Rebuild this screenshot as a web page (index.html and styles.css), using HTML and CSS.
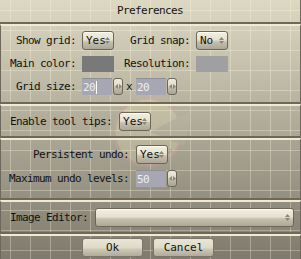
FILE: index.html
```html
<!DOCTYPE html>
<html lang="en">
<head>
  <meta charset="UTF-8" />
  <title>Preferences</title>
  <link rel="stylesheet" href="styles.css">
</head>
<body>
  <div class="window">
    <!-- faint logo behind the widgets -->
    <svg class="watermark" width="90" height="90" viewBox="0 0 90 90">
      <circle cx="42" cy="46" r="34" fill="#fff6c0" stroke="#e6a0a0" stroke-width="3"/>
      <path d="M44 46 L86 24 L78 60 Z" fill="#c9c2ae" />
      <path d="M30 60 Q44 78 66 64" fill="none" stroke="#e09090" stroke-width="4"/>
      <circle cx="34" cy="32" r="4" fill="#e0a0a0"/>
    </svg>

    <div class="title">Preferences</div>

    <section class="group grid-group">
      <div class="row">
        <span class="label col-a">Show grid:</span>
        <button class="menu small">Yes<svg class="updown" width="5" height="7" viewBox="0 0 5 7"><path d="M2.5 0 L5 3 L0 3 Z M0 4 L5 4 L2.5 7 Z" fill="#8a8678"/></svg></button>
        <span class="label col-b">Grid snap:</span>
        <button class="menu small">No<svg class="updown" width="5" height="7" viewBox="0 0 5 7"><path d="M2.5 0 L5 3 L0 3 Z M0 4 L5 4 L2.5 7 Z" fill="#8a8678"/></svg></button>
      </div>
      <div class="row">
        <span class="label col-a">Main color:</span>
        <span class="swatch main-color"></span>
        <span class="label col-b">Resolution:</span>
        <span class="swatch res-color"></span>
      </div>
      <div class="row">
        <span class="label col-a">Grid size:</span>
        <span class="entry">20<span class="cursor"></span></span>
        <span class="spin"><svg width="7" height="5" viewBox="0 0 7 5"><path d="M0 2.5 L3 0 L3 5 Z M4 0 L7 2.5 L4 5 Z" fill="#8a8678"/></svg></span>
        <span class="times">x</span>
        <span class="entry">20</span>
        <span class="spin"><svg width="7" height="5" viewBox="0 0 7 5"><path d="M0 2.5 L3 0 L3 5 Z M4 0 L7 2.5 L4 5 Z" fill="#8a8678"/></svg></span>
      </div>
    </section>

    <section class="group tips-group">
      <div class="row">
        <span class="label plain">Enable tool tips:</span>
        <button class="menu small">Yes<svg class="updown" width="5" height="7" viewBox="0 0 5 7"><path d="M2.5 0 L5 3 L0 3 Z M0 4 L5 4 L2.5 7 Z" fill="#8a8678"/></svg></button>
      </div>
    </section>

    <section class="group undo-group">
      <div class="row">
        <span class="label col-c">Persistent undo:</span>
        <button class="menu small">Yes<svg class="updown" width="5" height="7" viewBox="0 0 5 7"><path d="M2.5 0 L5 3 L0 3 Z M0 4 L5 4 L2.5 7 Z" fill="#8a8678"/></svg></button>
      </div>
      <div class="row">
        <span class="label col-c">Maximum undo levels:</span>
        <span class="entry">50</span>
        <span class="spin"><svg width="7" height="5" viewBox="0 0 7 5"><path d="M0 2.5 L3 0 L3 5 Z M4 0 L7 2.5 L4 5 Z" fill="#8a8678"/></svg></span>
      </div>
    </section>

    <section class="group editor-group">
      <div class="row">
        <span class="label plain">Image Editor:</span>
        <button class="menu wide"><svg class="updown" width="5" height="7" viewBox="0 0 5 7"><path d="M2.5 0 L5 3 L0 3 Z M0 4 L5 4 L2.5 7 Z" fill="#8a8678"/></svg></button>
      </div>
    </section>

    <section class="group buttons">
      <button class="push">Ok</button>
      <button class="push">Cancel</button>
    </section>
  </div>
</body>
</html>
```

FILE: styles.css
```css
:root {
  --dark-line: #6d685b;
  --light-line: #f2ead0;
  --text: #121212;
}

* {
  box-sizing: border-box;
}

body {
  margin: 0;
  font-family: 'DejaVu Sans Mono', monospace;
  font-size: 11px;
  letter-spacing: -0.62px;
  color: var(--text);
}

.window {
  position: relative;
  width: 301px;
  height: 259px;
  overflow: hidden;
  background-color: #b0aa98;
  background-image:
    linear-gradient(to right, rgba(255, 250, 225, 0.3) 1px, transparent 1px),
    linear-gradient(to bottom, rgba(255, 250, 225, 0.3) 1px, transparent 1px),
    linear-gradient(to bottom, #ddd8c2, #7e7a6d);
  background-size: 20px 20px, 20px 20px, 100% 100%;
  background-position: 10px 10px, 10px 10px, 0 0;
  display: flex;
  flex-direction: column;
}

.watermark {
  position: absolute;
  left: 106px;
  top: 86px;
  opacity: 0.2;
  pointer-events: none;
}

.title {
  position: relative;
  height: 24px;
  line-height: 22px;
  text-align: center;
  border-bottom: 2px solid var(--dark-line);
  border-right: 1px solid var(--dark-line);
}

.group {
  position: relative;
  border-top: 2px solid var(--light-line);
  border-bottom: 2px solid var(--dark-line);
  border-left: 1px solid var(--dark-line);
  border-right: 1px solid var(--dark-line);
}

.row {
  display: flex;
  align-items: center;
  height: 19px;
}

.label {
  white-space: pre;
  flex: none;
}

.col-a {
  width: 75px;
  margin-right: 6px;
  text-align: right;
}

.col-b {
  width: 76px;
  margin-right: 6px;
  text-align: right;
}

.col-c {
  width: 128px;
  margin-right: 7px;
  text-align: right;
}

.plain {
  margin-left: 9px;
  margin-right: 7px;
}

.grid-group {
  height: 80px;
  padding-top: 5px;
}

.grid-group .row + .row {
  margin-top: 4px;
}

.tips-group {
  height: 34px;
  display: flex;
  align-items: center;
}

.undo-group {
  height: 62px;
  padding-top: 5px;
}

.undo-group .row + .row {
  margin-top: 5px;
}

.editor-group {
  height: 34px;
  display: flex;
  align-items: center;
}

.editor-group .row {
  flex: 1;
}

.menu {
  position: relative;
  height: 19px;
  padding: 0 0 0 3px;
  font: inherit;
  color: var(--text);
  text-align: left;
  border: 1px solid #6a6659;
  border-radius: 3px;
  background: linear-gradient(to bottom, #f3efe0, #e6e2d1 45%, #c4bfac 60%, #aca796);
  box-shadow: inset 0 1px 0 #fffdf2;
}

.menu.small {
  width: 32px;
}

.menu.wide {
  width: 199px;
}

.updown {
  position: absolute;
  right: 3px;
  top: 5px;
}

.swatch {
  width: 32px;
  height: 16px;
  flex: none;
}

.main-color {
  background: #797979;
}

.res-color {
  background: #a0a0a3;
}

.entry {
  width: 30px;
  height: 17px;
  line-height: 17px;
  padding-left: 1px;
  flex: none;
  background: #a6a7b3;
  color: #eeeef0;
  border-top: 1px solid #8e8f9a;
  display: flex;
  align-items: center;
}

.cursor {
  display: inline-block;
  width: 1px;
  height: 13px;
  background: #ffffff;
  margin-left: 1px;
}

.spin {
  width: 10px;
  height: 17px;
  margin-left: 1px;
  flex: none;
  display: flex;
  align-items: center;
  justify-content: center;
  border: 1px solid #6a6659;
  border-radius: 3px;
  background: linear-gradient(to bottom, #f0ecdc, #e0dcca 45%, #c0bba8 60%, #aaa594);
}

.times {
  width: 6px;
  margin: 0 4px 0 3px;
  text-align: center;
}

.buttons {
  flex: 1;
  display: flex;
  align-items: center;
  justify-content: center;
  gap: 10px;
  border-bottom: none;
  padding-right: 5px;
}

.push {
  width: 61px;
  height: 19px;
  padding: 0;
  font: inherit;
  color: var(--text);
  border: 1px solid #79756a;
  border-radius: 3px;
  background: linear-gradient(to bottom, #eae6d6, #dedac8 50%, #ccc7b4 62%, #b0ab9a);
}
```
